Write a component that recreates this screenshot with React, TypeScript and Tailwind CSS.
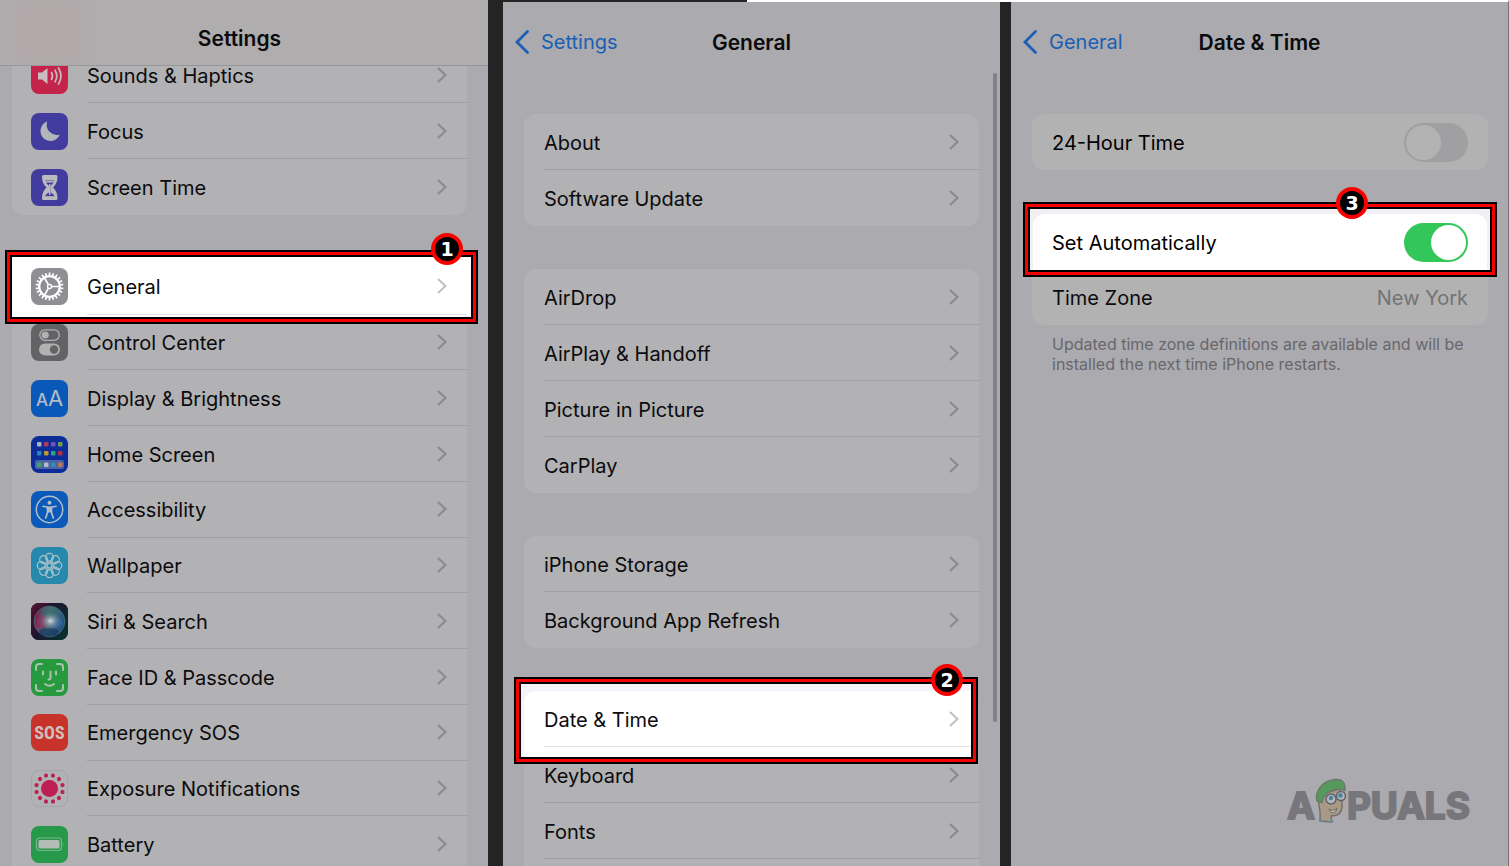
import React, { useState } from "react";

type Row = { label: string; icon?: React.ReactNode; step?: number };

const tile = "flex size-[37px] shrink-0 items-center justify-center overflow-hidden rounded-lg";

const petals = [0, 45, 90, 135, 180, 225, 270, 315];
const dots = [15, 45, 75, 105, 135, 165, 195, 225, 255, 285, 315, 345];
const teeth = Array.from({ length: 22 }, (_, i) => (i * 360) / 22);

const SoundIcon = () => (
  <span className={`${tile} bg-[#c4234a]`}>
    <svg viewBox="0 0 37 37" className="size-full" fill="none" stroke="#c9bcc0" strokeLinecap="round">
      <path d="M7 15.5h4l5.5-4.6v16.2l-5.5-4.6H7z" fill="#c9bcc0" stroke="none" />
      <path d="M20.5 15.5q2 3.5 0 7M24 13.2q3.6 5.8 0 11.6M27.5 11q5 8 0 16" strokeWidth="1.7" />
    </svg>
  </span>
);

const FocusIcon = () => (
  <span className={`${tile} bg-[#423c9f]`}>
    <svg viewBox="0 0 37 37" className="size-full">
      <path d="M16.2 8.5A10 10 0 1 0 28.8 21.5 A10.2 10.2 0 0 1 16.2 8.5z" fill="#b3b6b8" />
    </svg>
  </span>
);

const ScreenTimeIcon = () => (
  <span className={`${tile} bg-[#423c9f]`}>
    <svg viewBox="0 0 37 37" className="size-full">
      <path
        d="M12.5 6h12.5q1.5 0 1.5 1.5c0 5-1.5 8-4.5 11 3 3 4.5 6 4.5 11q0 1.5-1.5 1.5H12.5q-1.5 0-1.5-1.5c0-5 1.5-8 4.5-11-3-3-4.5-6-4.5-11q0-1.5 1.5-1.5z"
        fill="#b9bbbd"
      />
      <path d="M14.5 11.5h8.5c-.5 2.5-2 4-3.5 5.5v6.5c2 1 3.5 2 4 4H14c.5-2 2-3 4-4V17c-1.5-1.5-3-3-3.5-5.5z" fill="#423c9f" />
      <path d="M18.7 15v11M15 12.8h7.5M14.5 28h8.5" stroke="#b9bbbd" strokeWidth="1.5" />
    </svg>
  </span>
);

const GearIcon = () => (
  <span className={`${tile} bg-[#8f8e92]`}>
    <svg viewBox="0 0 37 37" className="size-full" fill="none" stroke="#fff">
      <circle cx="18.5" cy="18.5" r="10.3" strokeWidth="2.2" />
      {teeth.map((a) => (
        <path key={a} d="M18.5 7.5V4.6" strokeWidth="1.7" transform={`rotate(${a} 18.5 18.5)`} />
      ))}
      <circle cx="18.5" cy="18.5" r="2" strokeWidth="1.3" />
      <path d="M20.5 18.5h8.5M17.5 16.8l-4.5-7.8M17.5 20.2l-4.5 7.8" strokeWidth="1.7" />
    </svg>
  </span>
);

const ControlIcon = () => (
  <span className={`${tile} bg-[#636366]`}>
    <svg viewBox="0 0 37 37" className="size-full">
      <rect x="8.8" y="5.8" width="19.5" height="10.5" rx="5.2" fill="none" stroke="#b0b1b1" strokeWidth="1.3" />
      <circle cx="14.2" cy="11" r="3.6" fill="#b0b1b1" />
      <rect x="8" y="19.5" width="21" height="12" rx="6" fill="#b0b1b1" />
      <circle cx="23" cy="25.5" r="4.2" fill="#636366" />
    </svg>
  </span>
);

const DisplayIcon = () => (
  <span className={`${tile} bg-[#0a59b9] text-[#b4bcc6]`}>
    <span className="flex items-baseline pt-px">
      <span className="text-[17px] leading-7 font-medium">A</span>
      <span className="text-[22px] leading-7">A</span>
    </span>
  </span>
);

const HomeIcon = () => (
  <span className={`${tile} bg-[#0c2c97]`}>
    <svg viewBox="0 0 37 37" className="size-full">
      <rect x="4" y="24" width="29" height="9" rx="2" fill="#4c63a8" />
      {[
        "#aeb4c8", "#b03a5a", "#7350b8", "#6fa050",
        "#2a86b8", "#c09a30", "#35a080", "#b83038",
        "#3aa85a", "#b4bac8", "#2a90b8", "#c07848",
      ].map((c, i) => (
        <rect key={i} x={6 + (i % 4) * 7} y={i < 8 ? 6 + Math.floor(i / 4) * 9 : 26.5} width="4.5" height="4.5" rx="1" fill={c} />
      ))}
    </svg>
  </span>
);

const AccessIcon = () => (
  <span className={`${tile} bg-[#0b59b8]`}>
    <svg viewBox="0 0 37 37" className="size-full" fill="none" stroke="#b3bdc8">
      <circle cx="18.5" cy="18.5" r="13.2" strokeWidth="1.5" />
      <circle cx="18.5" cy="11.7" r="2" fill="#b3bdc8" stroke="none" />
      <path d="M12 15.3l4.5.9h4l4.5-.9" strokeWidth="1.6" strokeLinecap="round" />
      <path d="M16.5 16v5.5l-1.8 5.5M20.5 16v5.5l1.8 5.5" strokeWidth="1.7" strokeLinecap="round" />
      <path d="M18.5 16v5.5" strokeWidth="3.5" />
    </svg>
  </span>
);

const WallpaperIcon = () => (
  <span className={`${tile} bg-[#2788ae]`}>
    <svg viewBox="0 0 37 37" className="size-full" fill="none" stroke="#a9bfc8" strokeWidth="1.3">
      {petals.map((a) => (
        <circle key={a} cx="18.5" cy="10.2" r="3.9" transform={`rotate(${a} 18.5 18.5)`} />
      ))}
      {petals.map((a) => (
        <path key={a} d="M18.5 15.5V11" transform={`rotate(${a + 22} 18.5 18.5)`} />
      ))}
      <circle cx="18.5" cy="18.5" r="2.5" />
    </svg>
  </span>
);

const SiriIcon = () => (
  <span className={`${tile} bg-[#12121c]`}>
    <svg viewBox="0 0 37 37" className="size-full">
      <defs>
        <linearGradient id="siriBg" x1="0" x2="1" y1="0" y2=".6">
          <stop offset="0" stopColor="#5a1230" />
          <stop offset=".5" stopColor="#1b1630" />
          <stop offset="1" stopColor="#0a2e2c" />
        </linearGradient>
        <linearGradient id="siriOrb" x1="0" x2="1" y1=".4" y2=".6">
          <stop offset="0" stopColor="#7c1a48" />
          <stop offset=".45" stopColor="#5f6f84" />
          <stop offset="1" stopColor="#1d4d80" />
        </linearGradient>
        <radialGradient id="siriGlow">
          <stop offset="0" stopColor="#d4dade" />
          <stop offset=".4" stopColor="#8ba3ac" stopOpacity=".7" />
          <stop offset="1" stopColor="#3c6c74" stopOpacity="0" />
        </radialGradient>
      </defs>
      <rect width="37" height="37" fill="url(#siriBg)" />
      <circle cx="18.5" cy="18.5" r="15.3" fill="url(#siriOrb)" stroke="#456b78" strokeWidth="1" />
      <ellipse cx="19" cy="9" rx="9" ry="5" fill="#2d6e66" opacity=".6" />
      <ellipse cx="18" cy="29" rx="10" ry="4.5" fill="#163c60" opacity=".8" />
      <circle cx="11.5" cy="19" r="6" fill="#9a2c58" opacity=".6" />
      <ellipse cx="26" cy="20" rx="6" ry="4.5" fill="#2a64a0" opacity=".7" />
      <ellipse cx="19.5" cy="18" rx="12" ry="10" fill="url(#siriGlow)" />
    </svg>
  </span>
);

const FaceIdIcon = () => (
  <span className={`${tile} bg-[#279a40]`}>
    <svg viewBox="0 0 37 37" className="size-full" fill="none" stroke="#a9c2ae" strokeWidth="2" strokeLinecap="round">
      <path d="M5 11V8q0-3 3-3h3M26 5h3q3 0 3 3v3M32 26v3q0 3-3 3h-3M11 32H8q-3 0-3-3v-3" />
      <path d="M12 12.5v3M25 12.5v3M19.5 12.5v6.5q0 1.5-2 1.5M14 25q4.5 3.5 9 0" />
    </svg>
  </span>
);

const SosIcon = () => (
  <span className={`${tile} bg-[#c7322b] font-['Liberation_Sans_Narrow','Roboto_Condensed',Roboto,sans-serif] text-[18px] font-bold text-[#cdbfbd]`}>
    SOS
  </span>
);

const ExposureIcon = () => (
  <span className={`${tile} border border-[#a5a5a7]`}>
    <svg viewBox="0 0 37 37" className="size-full" fill="#bd1f55">
      <circle cx="18.5" cy="18.5" r="9" />
      {dots.map((a) => (
        <circle key={a} cx="18.5" cy="4.3" r="2.2" transform={`rotate(${a} 18.5 18.5)`} />
      ))}
    </svg>
  </span>
);

const BatteryIcon = () => (
  <span className={`${tile} bg-[#27994a]`}>
    <svg viewBox="0 0 37 37" className="size-full">
      <rect x="5.5" y="12" width="25" height="12.5" rx="3" fill="none" stroke="#7fb58d" strokeWidth="1.2" />
      <rect x="7.5" y="14" width="21" height="8.5" rx="1.5" fill="#b4bcb6" />
      <path d="M32.5 16.2q1.5 2 0 4z" fill="#7fb58d" />
    </svg>
  </span>
);

const Chevron = () => (
  <svg viewBox="0 0 10 16" className="h-4 w-[10px] shrink-0" fill="none" stroke="currentColor" strokeWidth="2">
    <path d="M1 1l7.5 7L1 15" />
  </svg>
);

const Badge = ({ step, className }: { step: number; className: string }) => (
  <span
    className={`absolute z-20 flex size-8 items-center justify-center rounded-full border-4 border-[#f80000] bg-black font-['DejaVu_Sans',sans-serif] text-[19px] leading-none font-bold text-white ${className}`}
  >
    {step}
  </span>
);

// white cut-out with the black / red / black outline
const frame = "absolute border-2 border-black shadow-[0_0_0_3px_#f80000,0_0_0_5px_#000] overflow-hidden";

const topRows: Row[] = [
  { label: "Sounds & Haptics", icon: <SoundIcon /> },
  { label: "Focus", icon: <FocusIcon /> },
  { label: "Screen Time", icon: <ScreenTimeIcon /> },
];

const mainRows: Row[] = [
  { label: "General", icon: <GearIcon />, step: 1 },
  { label: "Control Center", icon: <ControlIcon /> },
  { label: "Display & Brightness", icon: <DisplayIcon /> },
  { label: "Home Screen", icon: <HomeIcon /> },
  { label: "Accessibility", icon: <AccessIcon /> },
  { label: "Wallpaper", icon: <WallpaperIcon /> },
  { label: "Siri & Search", icon: <SiriIcon /> },
  { label: "Face ID & Passcode", icon: <FaceIdIcon /> },
  { label: "Emergency SOS", icon: <SosIcon /> },
  { label: "Exposure Notifications", icon: <ExposureIcon /> },
  { label: "Battery", icon: <BatteryIcon /> },
];

const generalGroups: Row[][] = [
  [{ label: "About" }, { label: "Software Update" }],
  [{ label: "AirDrop" }, { label: "AirPlay & Handoff" }, { label: "Picture in Picture" }, { label: "CarPlay" }],
  [{ label: "iPhone Storage" }, { label: "Background App Refresh" }],
];

const dateGroup: Row[] = [{ label: "Date & Time", step: 2 }, { label: "Keyboard" }, { label: "Fonts" }];

type ListProps = { rows: Row[]; className?: string; open?: boolean };

// open: the list goes on below the fold, so its last row keeps the divider
const List = ({ rows, className = "", open = false }: ListProps) => (
  <ul className={`flex flex-col bg-[#b2b1b3] ${open ? "rounded-t-xl pb-3" : "rounded-xl"} ${className}`}>
    {rows.map((row) => (
      <li key={row.label} className={`h-14 min-h-[55px] ${open ? "" : "group"} ${row.step ? "relative z-10" : ""}`}>
        {row.step === 1 && (
          <>
            <div className={`${frame} -top-1 -right-[6px] -bottom-1 -left-[2px] bg-white`}></div>
            <Badge step={1} className="-top-[26px] right-1" />
          </>
        )}
        {row.step === 2 && (
          <>
            <div className={`${frame} -top-[9px] right-[6px] -bottom-3 -left-[5px] bg-[#f4f2f8] pt-[7px] pl-[3px]`}>
              <div className="h-full rounded-tl-xl bg-white"></div>
            </div>
            <Badge step={2} className="-top-[27px] right-4" />
          </>
        )}
        <a href="#" className="relative flex h-full items-center gap-[19px] pl-5">
          {row.icon && <span className="-ml-px">{row.icon}</span>}
          <span
            className={`flex h-full flex-1 items-center justify-between border-b group-last:border-transparent ${
              row.step ? "border-[#e3e2e6] text-[#c0c0c3]" : "border-[#9e9da0] text-[#89898c]"
            } ${row.step === 2 ? "mr-2 pr-3" : "pr-5"}`}
          >
            <span className="pt-[2px] text-[#0b0b0d]">{row.label}</span>
            <Chevron />
          </span>
        </a>
      </li>
    ))}
  </ul>
);

const NavBar = ({ back, title }: { back: string; title: string }) => (
  <header className="grid h-20 shrink-0 grid-cols-[1fr_auto_1fr] items-center px-3">
    <button className="flex items-center gap-3 text-[#1a5fb4]">
      <svg viewBox="0 0 14 24" className="h-6 w-[14px]" fill="none" stroke="currentColor" strokeWidth="2.8" strokeLinecap="round">
        <path d="M12.5 1.5L2 12l10.5 10.5" />
      </svg>
      {back}
    </button>
    <h1 className="pt-[2px] text-[21px] font-semibold text-[#0b0b0d]">{title}</h1>
  </header>
);

const Toggle = ({ id, checked, onChange }: { id: string; checked: boolean; onChange: () => void }) => (
  <input
    id={id}
    type="checkbox"
    checked={checked}
    onChange={onChange}
    className="relative h-[39px] w-16 appearance-none rounded-full bg-[#a0a0a2] before:absolute before:top-[2px] before:left-[2px] before:size-[35px] before:rounded-full before:bg-[#b3b3b4] checked:bg-[#33c759] checked:before:left-[27px] checked:before:bg-white"
  />
);

const Mascot = () => (
  <svg viewBox="0 0 32 46" className="h-[46px] w-8" strokeLinejoin="round">
    <path d="M5 43c0-5 1-8-1-15L3 17l22-6 2 14q1 9-5 12-4 1-6 1l1 6z" fill="#a89a86" stroke="#73706f" strokeWidth="1.5" />
    <path d="M2 23C0 14 6 3 20 1.5q9-1 10 7v4q-7-3-13 0-6 2-9 8l-1 4z" fill="#559a5c" stroke="#6c7a6d" strokeWidth="1.5" />
    <circle cx="16" cy="21" r="5" fill="#b2b8bf" stroke="#606268" strokeWidth="1.5" />
    <circle cx="26" cy="18" r="4.5" fill="#b2b8bf" stroke="#606268" strokeWidth="1.5" />
    <circle cx="16" cy="20" r="2.2" fill="#4a7f9c" />
    <circle cx="25.5" cy="17.5" r="2.2" fill="#4a7f9c" />
    <path d="M14 31q4 3 8-1-1 5-4 5t-4-4z" fill="#c0c0c2" stroke="#6e6866" strokeWidth="1" />
    <path d="M4 44q1-3 3-3l1 3zM14 44l2-3 3 3z" fill="#5a93a8" />
  </svg>
);

const App = () => {
  const [is24Hour, setIs24Hour] = useState<boolean>(false);
  const [isAuto, setIsAuto] = useState<boolean>(true);

  return (
    <div className="grid h-screen grid-cols-[488fr_15px_497fr_11px_498fr] grid-rows-[100%] overflow-hidden bg-[#242425] font-[Inter,sans-serif] text-[20px] leading-7">
      <section className="flex min-w-0 flex-col overflow-hidden bg-[#abaaae] pr-[9px]">
        <header className="relative z-20 -mr-[9px] flex h-[66px] shrink-0 items-center justify-center overflow-hidden border-b border-[#98979a] bg-[#afadae] pt-3 pr-[9px]">
          <div className="absolute top-0 left-4 h-16 w-16 bg-[#b5a4a6] opacity-60 blur-sm"></div>
          <h1 className="text-[21px] font-semibold text-[#0b0b0d]">Settings</h1>
        </header>
        <List rows={topRows} className="-mt-[19px] mr-3 ml-3 shrink-0" />
        <List rows={mainRows} className="mt-11 mr-3 -mb-[6px] ml-3 min-h-0 flex-1" />
      </section>

      <div></div>

      <section className="relative flex min-w-0 flex-col overflow-hidden bg-[#abaaae]">
        <div className="h-[2px] shrink-0 bg-white">
          <div className="h-full w-[49%] bg-[#242425]"></div>
        </div>
        <NavBar back="Settings" title="General" />
        <div className="flex flex-col gap-[43px] px-[21px] pt-8">
          {generalGroups.map((rows) => (
            <List key={rows[0].label} rows={rows} />
          ))}
          <List rows={dateGroup} open />
        </div>
        <div className="absolute top-[73px] right-[3px] h-[649px] w-1 rounded-full bg-[#828185]"></div>
      </section>

      <div className="border-t-2 border-white"></div>

      <section className="flex min-w-0 flex-col border-t-2 border-r border-t-white border-r-[#747378] bg-[#abaaae]">
        <NavBar back="General" title="Date & Time" />
        <div className="flex flex-col gap-11 pt-8 pr-5 pl-[21px]">
          <div className="flex h-14 items-center justify-between rounded-xl bg-[#b2b2b3] px-5">
            <label htmlFor="hour24" className="pt-[2px]">24-Hour Time</label>
            <Toggle id="hour24" checked={is24Hour} onChange={() => setIs24Hour(!is24Hour)} />
          </div>
          <div>
            <div className="rounded-xl bg-[#b1b2b1]">
              <div className="relative h-14">
                <div className={`${frame} -top-[7px] -right-1 -bottom-[2px] -left-1 bg-[#f1f0f5] px-[3px] pt-[5px]`}>
                  <div className="h-full rounded-t-xl bg-white"></div>
                </div>
                <Badge step={3} className="-top-[27px] right-[120px]" />
                <div className="relative flex h-full items-center justify-between px-5">
                  <label htmlFor="auto" className="pt-[2px]">Set Automatically</label>
                  <Toggle id="auto" checked={isAuto} onChange={() => setIsAuto(!isAuto)} />
                </div>
              </div>
              <div className="flex h-[55px] items-center justify-between px-5">
                <span className="text-[#0b0b0d]">Time Zone</span>
                <span className="text-[#737376]">New York</span>
              </div>
            </div>
            <p className="px-5 pt-[9px] text-[16px] leading-5 text-[#68676b]">
              Updated time zone definitions are available and will be installed the next time iPhone restarts.
            </p>
          </div>
        </div>
        <div className="mt-auto mr-[38px] mb-[42px] flex items-end self-end text-[37px] leading-[36px] font-bold text-[#77767b] [-webkit-text-stroke:2px_#77767b]">
          <span>A</span>
          <Mascot />
          <span>PUALS</span>
        </div>
      </section>
    </div>
  );
};

export default App;
